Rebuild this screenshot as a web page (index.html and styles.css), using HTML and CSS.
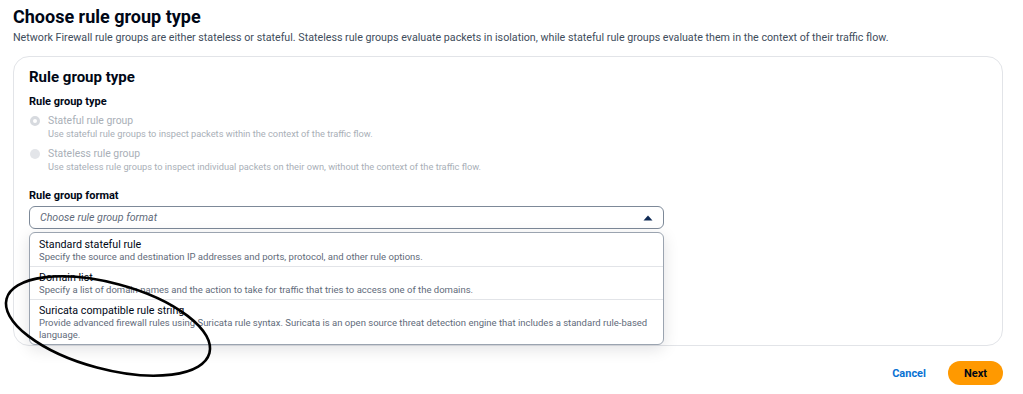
FILE: index.html
```html
<!DOCTYPE html>
<html lang="en">
<head>
  <meta charset="UTF-8" />
  <meta name="viewport" content="width=device-width, initial-scale=1.0"/>
  <title>Choose rule group type</title>
  <link rel="stylesheet" href="styles.css">
</head>
<body>

  <main class="page">
    <h1 class="page-title">Choose rule group type</h1>
    <p class="page-desc">Network Firewall rule groups are either stateless or stateful. Stateless rule groups evaluate packets in isolation, while stateful rule groups evaluate them in the context of their traffic flow.</p>

    <section class="card">
      <h2 class="card-title">Rule group type</h2>

      <div class="field">
        <div class="field-label">Rule group type</div>
        <label class="radio checked">
          <span class="radio-dot"></span>
          <span class="radio-text">
            <span class="radio-title">Stateful rule group</span>
            <span class="radio-desc">Use stateful rule groups to inspect packets within the context of the traffic flow.</span>
          </span>
        </label>
        <label class="radio">
          <span class="radio-dot"></span>
          <span class="radio-text">
            <span class="radio-title">Stateless rule group</span>
            <span class="radio-desc">Use stateless rule groups to inspect individual packets on their own, without the context of the traffic flow.</span>
          </span>
        </label>
      </div>

      <div class="field format">
        <div class="field-label">Rule group format</div>
        <div class="select-wrap">
          <div class="select">
            <span class="select-placeholder">Choose rule group format</span>
            <svg class="caret" width="10" height="6" viewBox="0 0 10 6"><path d="M0.5 5.5 L5 0.5 L9.5 5.5 Z" fill="#0f2a55"/></svg>
          </div>
          <ul class="menu">
            <li class="option">
              <div class="option-title">Standard stateful rule</div>
              <div class="option-desc">Specify the source and destination IP addresses and ports, protocol, and other rule options.</div>
            </li>
            <li class="option">
              <div class="option-title">Domain list</div>
              <div class="option-desc">Specify a list of domain names and the action to take for traffic that tries to access one of the domains.</div>
            </li>
            <li class="option">
              <div class="option-title">Suricata compatible rule string</div>
              <div class="option-desc">Provide advanced firewall rules using Suricata rule syntax. Suricata is an open source threat detection engine that includes a standard rule-based language.</div>
            </li>
          </ul>
        </div>
      </div>
    </section>

    <div class="actions">
      <a class="link-btn" href="#">Cancel</a>
      <button class="primary-btn">Next</button>
    </div>

    <!-- hand drawn annotation -->
    <svg class="annotation" width="230" height="130" viewBox="0 0 230 130">
      <ellipse cx="108" cy="66" rx="105" ry="43" transform="rotate(15 108 66)"
               fill="none" stroke="#000" stroke-width="2.6"/>
    </svg>
  </main>

</body>
</html>
```

FILE: styles.css
```css
body {
  font-family: Roboto, 'Open Sans', sans-serif;
  background: #fff;
  color: #16191f;
  margin: 0;
}
.page {
  position: relative;
  padding: 4px 20px 0 13px;
}
.page-title {
  font-size: 18px;
  line-height: 26px;
  font-weight: 700;
  margin: 0;
  color: #000716;
}
.page-desc {
  font-size: 10.7px;
  line-height: 14px;
  margin: 1px 0 0;
  color: #414d5c;
}
.card {
  box-sizing: border-box;
  height: 290px;
  margin-top: 11px;
  padding: 10px 15px;
  border: 1px solid #e2e4e8;
  border-radius: 16px;
}
.card-title {
  font-size: 15px;
  line-height: 20px;
  font-weight: 700;
  margin: 0;
  color: #000716;
}
.field {
  margin-top: 8px;
}
.field-label {
  font-size: 11px;
  line-height: 14px;
  font-weight: 700;
  color: #000716;
}
.radio {
  display: flex;
  gap: 8px;
  margin-top: 5px;
}
.radio + .radio {
  margin-top: 7px;
}
.radio-dot {
  flex: none;
  box-sizing: border-box;
  width: 10px;
  height: 10px;
  margin: 2px 0 0 1px;
  border-radius: 50%;
  background: #e3e5e9;
}
.radio.checked .radio-dot {
  border: 3px solid #d7dadf;
  background: #fff;
}
.radio-text {
  display: flex;
  flex-direction: column;
}
.radio-title {
  font-size: 10.4px;
  line-height: 14px;
  color: #a9afb7;
}
.radio-desc {
  font-size: 9.25px;
  line-height: 12px;
  color: #a9afb7;
}
.format {
  margin-top: 16px;
}
.select-wrap {
  position: relative;
  width: 635px;
  margin-top: 3px;
}
.select {
  box-sizing: border-box;
  height: 23px;
  display: flex;
  align-items: center;
  justify-content: space-between;
  padding: 0 10px;
  border: 1px solid #7d8998;
  border-radius: 6px;
}
.select-placeholder {
  font-size: 10.6px;
  font-style: italic;
  color: #5f6b7a;
}
.menu {
  position: absolute;
  top: 26px;
  left: 0;
  right: 0;
  margin: 0;
  padding: 0;
  list-style: none;
  background: #fff;
  border: 1px solid #9ba4b0;
  border-radius: 6px;
  box-shadow: 0 4px 16px rgba(0, 7, 22, 0.12);
}
.option {
  padding: 4px 9px 3px;
  border-top: 1px solid #e2e4e8;
}
.option:first-child {
  padding-top: 5px;
  border-top: none;
}
.option-title {
  font-size: 10.7px;
  line-height: 13px;
  color: #000716;
}
.option-desc {
  font-size: 9.5px;
  line-height: 12px;
  color: #5f6b7a;
}
.actions {
  display: flex;
  justify-content: flex-end;
  align-items: center;
  gap: 22px;
  margin-top: 15px;
}
.link-btn {
  font-size: 11px;
  font-weight: 700;
  color: #0972d3;
  text-decoration: none;
}
.primary-btn {
  height: 24px;
  padding: 0 16px;
  border: none;
  border-radius: 12px;
  background: #ff9900;
  color: #000716;
  font-family: inherit;
  font-size: 11px;
  font-weight: 700;
}
.annotation {
  position: absolute;
  left: 0;
  top: 260px;
  pointer-events: none;
}
```
